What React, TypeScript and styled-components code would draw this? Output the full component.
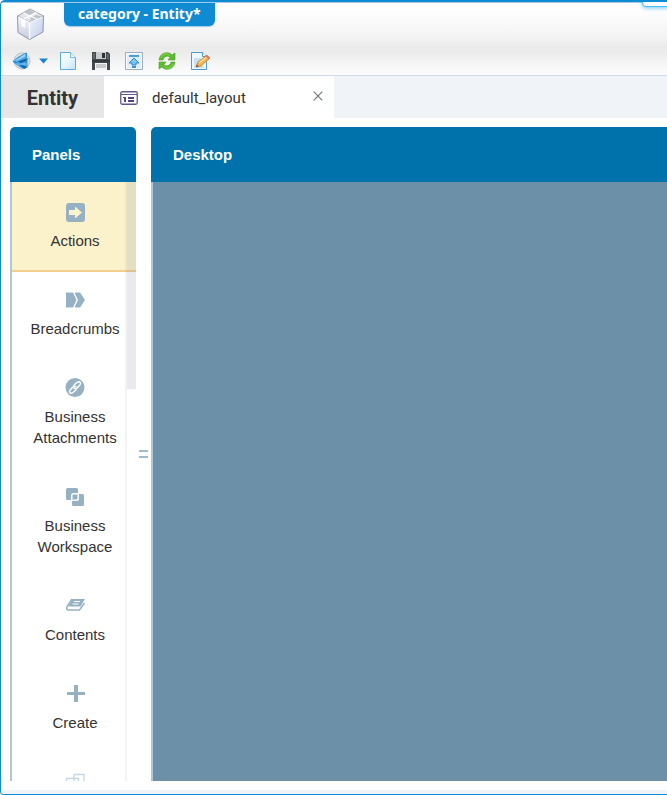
import React, { useState } from 'react';
import styled, { createGlobalStyle } from 'styled-components';

const GlobalStyle = createGlobalStyle`
  * { box-sizing: border-box; }
  body { margin: 0; background: #fff; overflow: hidden; }
  button { font: inherit; color: inherit; border: 0; padding: 0; background: none; cursor: pointer; }
  svg { display: block; }
`;

const Frame = styled.div`
  position: relative;
  display: flex;
  flex-direction: column;
  height: 100vh;
  border-top: 2px solid #0f8bd3;
  border-left: 1px solid #0f8bd3;
  border-bottom: 1px solid #0f8bd3;
  border-radius: 5px 0 0 4px;
  overflow: hidden;
  font-family: 'Liberation Sans', Arial, sans-serif;
  color: #333;
`;

const Header = styled.header`
  display: flex;
  flex-direction: column;
  justify-content: space-between;
  height: 74px;
  padding-bottom: 4px;
  border-top: 1px solid #a3c8e8;
  border-bottom: 1px solid #cfdaea;
  background: linear-gradient(#fff 0%, #fcfcfc 18%, #f4f4f4 45%, #eaeaea 62%, #ececec 70%, #f6f6f6 86%, #fcfcfc 100%);
`;

const Brand = styled.div`
  display: flex;
  align-items: flex-start;
  gap: 19px;
  padding-left: 14px;
`;

const LogoBox = styled.div`
  padding-top: 4px;
`;

const WindowTitle = styled.h1`
  margin: 0;
  padding: 0 14px;
  height: 23px;
  border-radius: 0 0 6px 6px;
  background: #0f8bd3;
  color: #fff;
  font: bold 14px/22px 'Noto Sans', 'Open Sans', sans-serif;
  white-space: nowrap;
  box-shadow: 0 1px 1px #a3c8e8;
`;

const Toolbar = styled.div`
  display: flex;
  align-items: center;
  gap: 10px;
  padding-left: 10px;
`;

const ToolGroup = styled.div<{ $gap: number }>`
  display: flex;
  align-items: center;
  gap: ${(p) => p.$gap}px;
`;

const ToolButton = styled.button`
  flex: none;
`;

const TabBar = styled.nav`
  display: flex;
  flex: none;
  height: 42px;
  background: #f0f4f8;
`;

const EntityTab = styled.button`
  width: 103px;
  padding-top: 2px;
  background: #e6e6e6;
  font: bold 20px/40px Roboto, sans-serif;
`;

const LayoutTab = styled.div`
  display: flex;
  align-items: center;
  width: 230px;
  padding: 0 11px 0 16px;
  background: #fff;
`;

const TabName = styled.button`
  display: flex;
  flex: 1;
  align-items: center;
  gap: 14px;
  padding-top: 2px;
  font: 15px/40px Roboto, sans-serif;
`;

const CloseButton = styled.button`
  padding-bottom: 3px;
`;

const Workspace = styled.main`
  display: flex;
  flex: 1;
  min-height: 0;
  padding: 9px 0 9px 9px;
`;

const Pane = styled.section<{ $width?: number }>`
  display: flex;
  flex-direction: column;
  min-width: 0;
  flex: ${(p) => (p.$width ? `0 0 ${p.$width}px` : '1')};
`;

const PaneTitle = styled.h2<{ $open?: boolean }>`
  flex: none;
  margin: 0;
  padding-left: 22px;
  border-radius: ${(p) => (p.$open ? '5px 0 0 0' : '5px 5px 0 0')};
  background: #0072ab;
  color: #fff;
  font-size: 15px;
  font-weight: bold;
  line-height: 55px;
`;

const PanelBody = styled.div`
  position: relative;
  flex: 1;
  min-height: 0;
  border-left: 2px solid #b0c8d6;
  overflow: hidden;
`;

const DesktopArea = styled.div`
  flex: 1;
  border-left: 2px solid #b0c8d6;
  background: #6c90a8;
`;

const PanelList = styled.ul`
  margin: 0;
  padding: 0;
  list-style: none;
`;

const PanelItem = styled.button<{ $active: boolean }>`
  display: flex;
  flex-direction: column;
  align-items: center;
  gap: 7px;
  width: 100%;
  padding: 20px 14px 19px 16px;
  background: ${(p) => (p.$active ? '#fbf1cb' : 'transparent')};
  box-shadow: ${(p) => (p.$active ? '0 2px #f1cf91' : 'none')};
  font-size: 15px;
  line-height: 21px;
  text-align: center;
`;

const ScrollTrack = styled.div`
  position: absolute;
  inset: 0 0 0 auto;
  width: 11px;
  border-left: 2px solid rgba(80, 80, 90, 0.07);
`;

const ScrollThumb = styled.div`
  height: 207px;
  background: rgba(130, 140, 155, 0.18);
`;

const Splitter = styled.div`
  display: flex;
  flex: 0 0 15px;
  align-items: center;
  justify-content: center;
`;

const Grip = styled.span`
  width: 9px;
  height: 8px;
  border: solid #a0bccb;
  border-width: 2px 0;
`;

const StatusStrip = styled.footer`
  flex: none;
  height: 4px;
  background: #f0f3f7;
`;

const CornerPopup = styled.div`
  position: absolute;
  top: -4px;
  right: -4px;
  width: 29px;
  height: 9px;
  border: 1px solid #46bdf5;
  border-radius: 4px;
  background: #fff;
  box-shadow: 0 1px 4px #72c6f2;
`;

const LogoIcon = () => (
  <svg width="30" height="34" viewBox="0 0 30 34" aria-hidden="true">
    <defs>
      <linearGradient id="cubeL" x2="0" y2="1"><stop stopColor="#f6f8fc" /><stop offset="1" stopColor="#c3cbdc" /></linearGradient>
      <linearGradient id="cubeR" x2="1" y2="1"><stop stopColor="#f0f4ff" /><stop offset="1" stopColor="#c0cbe6" /></linearGradient>
    </defs>
    <path d="M2.500 9 14.500 15V32.500L3 25.500Z" fill="url(#cubeL)" stroke="#8f97a8" />
    <path d="M14.500 15 28.500 9 28 25 14.500 32.500Z" fill="url(#cubeR)" stroke="#8d97b0" />
    <path d="M2.500 9 15 2 28.500 9 14.500 15Z" fill="#e4e6ec" stroke="#a2a6ad" />
    <path d="M9 6 14.500 2.800 19.500 5.500 14 8.500ZM16 10.800 21 8 26 9.500 15 14.200Z" fill="#bcc0c9" />
    <path d="m8.500 6 13.500 6M21.500 5.500 9 12" stroke="#fff" strokeWidth="1.300" />
    <path d="M14.500 15.500V32" stroke="#fff" strokeWidth="1.200" />
    <path d="M6.500 11.500 10 13v8l-3.500-2Z" fill="#fff" />
    <path d="m3.500 10 11 5.500L27.500 10" fill="none" stroke="#fff" />
  </svg>
);

const BackIcon = () => (
  <svg width="20" height="20" viewBox="0 0 20 20" aria-hidden="true">
    <circle cx="11" cy="10" r="8" fill="#dde1e5" stroke="#b9c0c8" />
    <path d="M1.500 10.500 7 6l8-4.500 1 .5v5l1.500 1-1 1v7.500L13 18l-6-3Z" fill="#2b8fd6" />
    <path d="M3 10 14.500 2.500v3L8 9.500Z" fill="#9bd2f5" />
    <path d="m4.500 10.500 11-5.500v4l-8 3Z" fill="#4aa8e6" />
    <path d="m7 10.500 8.500-3v2l-6 2.500Z" fill="#10609f" />
    <path d="m4 12 4 .5 7.500-1v4l-3-1-5 .5Z" fill="#62b8ee" />
    <path d="m8 13.500 7 1.500v2l-2 .5Z" fill="#1566a6" />
  </svg>
);

const CaretIcon = () => (
  <svg width="9" height="6" viewBox="0 0 9 6" aria-hidden="true"><path d="M0 .5h9L4.500 5.500Z" fill="#1784d3" /></svg>
);

const NewIcon = () => (
  <svg width="20" height="20" viewBox="0 0 20 20" aria-hidden="true">
    <defs><linearGradient id="sheet" x2="1" y2="1"><stop stopColor="#fff" /><stop offset=".5" stopColor="#e9f6ff" /><stop offset="1" stopColor="#bfe3fb" /></linearGradient></defs>
    <path d="M2.500 1.500h10l5 5v12h-15Z" fill="url(#sheet)" stroke="#5caade" />
    <path d="M12.500 1.500v5h5" fill="#fff" stroke="#7abce8" />
  </svg>
);

const SaveIcon = () => (
  <svg width="20" height="20" viewBox="0 0 20 20" aria-hidden="true">
    <path d="M1 1h16l2 2v16H1Z" fill="#45484c" />
    <path d="M2 2h2v6H2zM16 3h2v5h-2z" fill="#63666a" />
    <path d="M5 1h10v7H5z" fill="#c8cbce" />
    <path d="M11 2h3v5h-3z" fill="#303336" />
    <path d="M4 12h12v7H4z" fill="#f3f4f5" />
    <path d="M5 14h10M5 16h10" stroke="#9da1a4" />
    <path d="M1 10h18" stroke="#292c2f" />
  </svg>
);

const UploadIcon = () => (
  <svg width="20" height="20" viewBox="0 0 20 20" aria-hidden="true">
    <path d="M1.500 1.500h17v17h-17z" fill="#e2edf7" stroke="#9dadc0" />
    <path d="M2.500 2.500h15v15h-15z" fill="none" stroke="#f8fbff" />
    <path d="M5 4h10v2H5z" fill="#4a9fd8" />
    <path d="m10 7 5 5h-3v2H8v-2H5Z" fill="#7cc6f4" stroke="#2b8acc" />
    <path d="M8 16h4" stroke="#3b95d4" strokeWidth="2" />
  </svg>
);

const RefreshIcon = () => (
  <svg width="20" height="20" viewBox="0 0 20 20" aria-hidden="true">
    <path d="M2 9C3 1 12 0 15 4l3-2v7h-7l2-2.500C11 4 7 5 6 9Z" fill="#5dbb30" stroke="#4aa524" strokeWidth=".6" />
    <path d="M18 11c-1 8-10 9-13 5l-3 2v-7h7l-2 2.500c2 2.500 6 1.500 7-2.500Z" fill="#5dbb30" stroke="#4aa524" strokeWidth=".6" />
    <path d="M4 7c2-5 7-5 9-2M16 13c-2 5-7 5-9 2" fill="none" stroke="#8bd64e" />
  </svg>
);

const EditIcon = () => (
  <svg width="20" height="20" viewBox="0 0 20 20" aria-hidden="true">
    <path d="M1.500 1.500h11l4 4v13h-15Z" fill="#edf7ff" stroke="#4d99d1" />
    <path d="M12.500 1.500v4h4" fill="#fff" stroke="#4d99d1" />
    <path d="M4 8h7M4 10h6M4 12h4M4 14h3M4 16h10" stroke="#a9c9e3" />
    <path d="m6 16 2-5 9-7 3 3-9 8Z" fill="#f5b64f" stroke="#bc7a2a" strokeWidth=".8" />
    <path d="m9 12 9-7" stroke="#ffe19a" strokeWidth="1.300" />
    <path d="m17 4 3 3-1.500 1.500-3-3Z" fill="#dc8170" />
    <path d="m6 16 1-2 1.500 1Z" fill="#333" />
  </svg>
);

const LayoutIcon = () => (
  <svg width="18" height="14" viewBox="0 0 18 14" aria-hidden="true">
    <rect x=".75" y=".75" width="16.500" height="12.500" rx="1.500" fill="#fff" stroke="#66568f" strokeWidth="1.300" />
    <path d="M1 3.500h16" stroke="#66568f" />
    <path d="M3 6h3v1H3zM4 7h2v4H4zM8 6h6v2H8zM8 9h6v2H8z" fill="#55457f" />
  </svg>
);

const CloseIcon = () => (
  <svg width="10" height="10" viewBox="0 0 10 10" aria-hidden="true"><path d="m.7.7 8.600 8.600m0-8.600L.7 9.300" stroke="#757575" strokeWidth="1.200" /></svg>
);

const ITEM_COLOR = '#95b1c2';

const shapes: Record<string, React.ReactNode> = {
  actions: (
    <>
      <rect x="1" y="1" width="19" height="19" rx="3" fill={ITEM_COLOR} />
      <path d="M4 8h6V4.500l7 6-7 6V13H4Z" fill="#fcf3ce" />
    </>
  ),
  breadcrumbs: <path d="M1 2.500h7l3.500 7.500L8 17.500H1ZM9.500 2.500H15l5 7.500-5 7.500H9.500L13 10Z" fill={ITEM_COLOR} />,
  attachments: (
    <>
      <circle cx="10" cy="9.500" r="9.500" fill={ITEM_COLOR} />
      <g fill="none" stroke="#fff" strokeWidth="1.500" strokeLinecap="round">
        <path d="m9 7 3.200-2.700c2.500-1.500 4.300.6 2.700 2.600l-3 3.300c-1 1-2.200.8-3-.1" />
        <path d="m11 12-3.200 2.700c-2.500 1.500-4.300-.6-2.700-2.600l3-3.300c1-1 2.200-.8 3 .1" />
      </g>
    </>
  ),
  workspace: (
    <>
      <path d="M2.500 1h9A1.500 1.500 0 0 1 13 2.500V6H8.500A2.500 2.500 0 0 0 6 8.500V13H2.500A1.500 1.500 0 0 1 1 11.500v-9A1.500 1.500 0 0 1 2.500 1Z" fill={ITEM_COLOR} />
      <path d="M14 7h3.500A1.500 1.500 0 0 1 19 8.500v9a1.500 1.500 0 0 1-1.500 1.500h-9A1.500 1.500 0 0 1 7 17.500V14h5a2 2 0 0 0 2-2Z" fill={ITEM_COLOR} />
      <path d="M8.500 7.500h4v4a1 1 0 0 1-1 1h-4v-4a1 1 0 0 1 1-1Z" fill={ITEM_COLOR} />
    </>
  ),
  contents: (
    <>
      <path d="M7.500 3H20l-4.500 7.500H3Z" fill={ITEM_COLOR} />
      <path d="M9 5.500h6M7.500 8h6" stroke="#fff" strokeWidth="1.200" />
      <path d="m7 3-5 7.500q-1 3.500 1 3.500h11.500l5-7" fill="none" stroke={ITEM_COLOR} strokeWidth="1.500" />
    </>
  ),
  create: <path d="M9 1h4v7h7v3h-7v7H9v-7H2V8h7Z" fill={ITEM_COLOR} />,
  related: (
    <g fill="none" stroke="#c6d7e0" strokeWidth="1.300">
      <path d="M9 2.500h10v12H9zM1.500 6.500h12v12h-12z" />
    </g>
  ),
};

const panels = [
  { icon: 'actions', label: 'Actions' },
  { icon: 'breadcrumbs', label: 'Breadcrumbs' },
  { icon: 'attachments', label: 'Business Attachments' },
  { icon: 'workspace', label: 'Business Workspace' },
  { icon: 'contents', label: 'Contents' },
  { icon: 'create', label: 'Create' },
  { icon: 'related', label: '' },
];

export default function App() {
  const [selected, setSelected] = useState('actions');
  return (
    <>
      <GlobalStyle />
      <Frame>
        <Header>
          <Brand>
            <LogoBox><LogoIcon /></LogoBox>
            <WindowTitle>category - Entity*</WindowTitle>
          </Brand>
          <Toolbar role="toolbar">
            <ToolGroup $gap={8}>
              <ToolButton aria-label="Back"><BackIcon /></ToolButton>
              <ToolButton aria-label="History"><CaretIcon /></ToolButton>
            </ToolGroup>
            <ToolGroup $gap={13}>
              <ToolButton aria-label="New"><NewIcon /></ToolButton>
              <ToolButton aria-label="Save"><SaveIcon /></ToolButton>
              <ToolButton aria-label="Publish"><UploadIcon /></ToolButton>
              <ToolButton aria-label="Refresh"><RefreshIcon /></ToolButton>
              <ToolButton aria-label="Edit"><EditIcon /></ToolButton>
            </ToolGroup>
          </Toolbar>
        </Header>
        <TabBar>
          <EntityTab>Entity</EntityTab>
          <LayoutTab>
            <TabName><LayoutIcon />default_layout</TabName>
            <CloseButton aria-label="Close tab"><CloseIcon /></CloseButton>
          </LayoutTab>
        </TabBar>
        <Workspace>
          <Pane $width={126}>
            <PaneTitle>Panels</PaneTitle>
            <PanelBody>
              <PanelList>
                {panels.map((p) => (
                  <li key={p.icon}>
                    <PanelItem
                      $active={selected === p.icon}
                      aria-label={p.label || 'Related'}
                      aria-pressed={selected === p.icon}
                      onClick={() => setSelected(p.icon)}
                    >
                      <svg width="21" height="21" viewBox="0 0 21 21" aria-hidden="true">{shapes[p.icon]}</svg>
                      {p.label}
                    </PanelItem>
                  </li>
                ))}
              </PanelList>
              <ScrollTrack><ScrollThumb /></ScrollTrack>
            </PanelBody>
          </Pane>
          <Splitter role="separator" aria-orientation="vertical"><Grip /></Splitter>
          <Pane>
            <PaneTitle $open>Desktop</PaneTitle>
            <DesktopArea />
          </Pane>
        </Workspace>
        <StatusStrip />
        <CornerPopup />
      </Frame>
    </>
  );
}
